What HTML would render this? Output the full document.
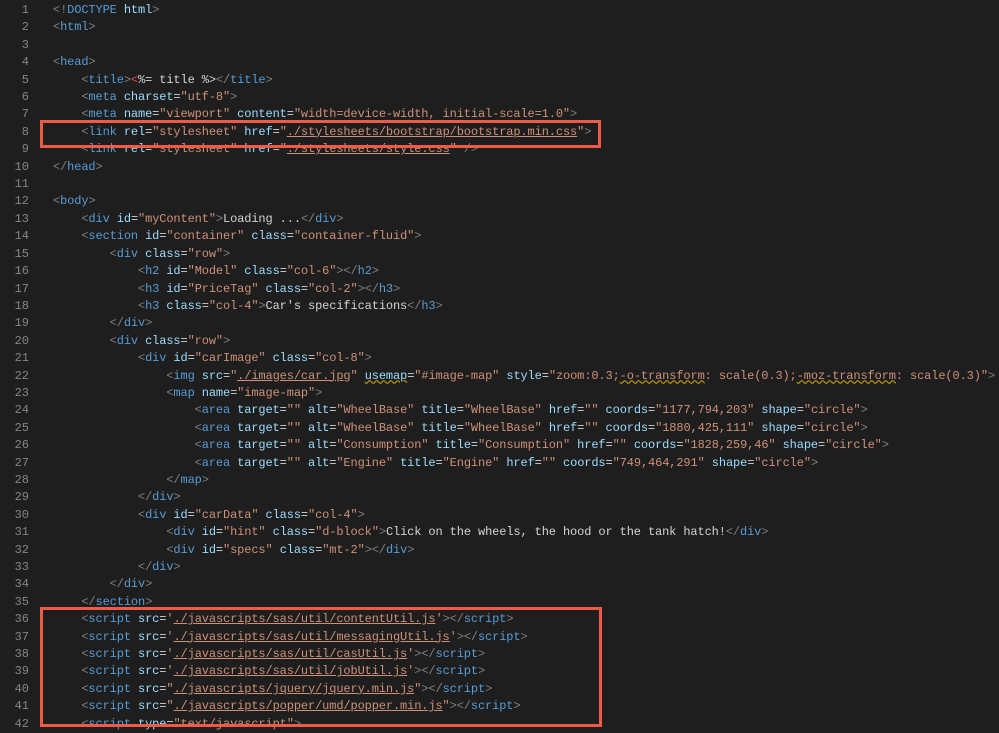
<!DOCTYPE html>
<html><head><meta charset="utf-8"><style>
body{margin:0;background:#1e1e1e;width:999px;height:727px;overflow:hidden;position:relative}
pre{margin:0;position:absolute;top:2px;left:0;font:12px/17.4px "Liberation Mono",monospace;color:#d4d4d4;letter-spacing:-0.12px}
.n{display:inline-block;width:29px;text-align:right;color:#858585;margin-right:24px;letter-spacing:0}
.t{color:#569cd6}.p{color:#808080}.a{color:#9cdcfe}.s{color:#ce9178}.r{color:#f44747}
.u{text-decoration:underline;text-decoration-color:#ce9178}
.w{text-decoration:underline wavy #b89500}
.box{position:absolute;border:3px solid #f05a46;box-sizing:border-box}
</style></head><body>
<pre><span class="n">1</span><span class="p">&lt;!</span><span class="t">DOCTYPE</span> <span class="a">html</span><span class="p">&gt;</span>
<span class="n">2</span><span class="p">&lt;</span><span class="t">html</span><span class="p">&gt;</span>
<span class="n">3</span>
<span class="n">4</span><span class="p">&lt;</span><span class="t">head</span><span class="p">&gt;</span>
<span class="n">5</span>    <span class="p">&lt;</span><span class="t">title</span><span class="p">&gt;</span><span class="r">&lt;</span>%= title %&gt;<span class="p">&lt;/</span><span class="t">title</span><span class="p">&gt;</span>
<span class="n">6</span>    <span class="p">&lt;</span><span class="t">meta</span> <span class="a">charset</span>=<span class="s">"utf-8"</span><span class="p">&gt;</span>
<span class="n">7</span>    <span class="p">&lt;</span><span class="t">meta</span> <span class="a">name</span>=<span class="s">"viewport"</span> <span class="a">content</span>=<span class="s">"width=device-width, initial-scale=1.0"</span><span class="p">&gt;</span>
<span class="n">8</span>    <span class="p">&lt;</span><span class="t">link</span> <span class="a">rel</span>=<span class="s">"stylesheet"</span> <span class="a">href</span>=<span class="s">"<span class="u">./stylesheets/bootstrap/bootstrap.min.css</span>"</span><span class="p">&gt;</span>
<span class="n">9</span>    <span class="p">&lt;</span><span class="t">link</span> <span class="a">rel</span>=<span class="s">"stylesheet"</span> <span class="a">href</span>=<span class="s">"<span class="u">./stylesheets/style.css</span>"</span> <span class="p">/&gt;</span>
<span class="n">10</span><span class="p">&lt;/</span><span class="t">head</span><span class="p">&gt;</span>
<span class="n">11</span>
<span class="n">12</span><span class="p">&lt;</span><span class="t">body</span><span class="p">&gt;</span>
<span class="n">13</span>    <span class="p">&lt;</span><span class="t">div</span> <span class="a">id</span>=<span class="s">"myContent"</span><span class="p">&gt;</span>Loading ...<span class="p">&lt;/</span><span class="t">div</span><span class="p">&gt;</span>
<span class="n">14</span>    <span class="p">&lt;</span><span class="t">section</span> <span class="a">id</span>=<span class="s">"container"</span> <span class="a">class</span>=<span class="s">"container-fluid"</span><span class="p">&gt;</span>
<span class="n">15</span>        <span class="p">&lt;</span><span class="t">div</span> <span class="a">class</span>=<span class="s">"row"</span><span class="p">&gt;</span>
<span class="n">16</span>            <span class="p">&lt;</span><span class="t">h2</span> <span class="a">id</span>=<span class="s">"Model"</span> <span class="a">class</span>=<span class="s">"col-6"</span><span class="p">&gt;&lt;/</span><span class="t">h2</span><span class="p">&gt;</span>
<span class="n">17</span>            <span class="p">&lt;</span><span class="t">h3</span> <span class="a">id</span>=<span class="s">"PriceTag"</span> <span class="a">class</span>=<span class="s">"col-2"</span><span class="p">&gt;&lt;/</span><span class="t">h3</span><span class="p">&gt;</span>
<span class="n">18</span>            <span class="p">&lt;</span><span class="t">h3</span> <span class="a">class</span>=<span class="s">"col-4"</span><span class="p">&gt;</span>Car's specifications<span class="p">&lt;/</span><span class="t">h3</span><span class="p">&gt;</span>
<span class="n">19</span>        <span class="p">&lt;/</span><span class="t">div</span><span class="p">&gt;</span>
<span class="n">20</span>        <span class="p">&lt;</span><span class="t">div</span> <span class="a">class</span>=<span class="s">"row"</span><span class="p">&gt;</span>
<span class="n">21</span>            <span class="p">&lt;</span><span class="t">div</span> <span class="a">id</span>=<span class="s">"carImage"</span> <span class="a">class</span>=<span class="s">"col-8"</span><span class="p">&gt;</span>
<span class="n">22</span>                <span class="p">&lt;</span><span class="t">img</span> <span class="a">src</span>=<span class="s">"<span class="u">./images/car.jpg</span>"</span> <span class="a w">usemap</span>=<span class="s">"#image-map"</span> <span class="a">style</span>=<span class="s">"zoom:0.3;<span class="w">-o-transform</span>: scale(0.3);<span class="w">-moz-transform</span>: scale(0.3)"</span><span class="p">&gt;</span>
<span class="n">23</span>                <span class="p">&lt;</span><span class="t">map</span> <span class="a">name</span>=<span class="s">"image-map"</span><span class="p">&gt;</span>
<span class="n">24</span>                    <span class="p">&lt;</span><span class="t">area</span> <span class="a">target</span>=<span class="s">""</span> <span class="a">alt</span>=<span class="s">"WheelBase"</span> <span class="a">title</span>=<span class="s">"WheelBase"</span> <span class="a">href</span>=<span class="s">""</span> <span class="a">coords</span>=<span class="s">"1177,794,203"</span> <span class="a">shape</span>=<span class="s">"circle"</span><span class="p">&gt;</span>
<span class="n">25</span>                    <span class="p">&lt;</span><span class="t">area</span> <span class="a">target</span>=<span class="s">""</span> <span class="a">alt</span>=<span class="s">"WheelBase"</span> <span class="a">title</span>=<span class="s">"WheelBase"</span> <span class="a">href</span>=<span class="s">""</span> <span class="a">coords</span>=<span class="s">"1880,425,111"</span> <span class="a">shape</span>=<span class="s">"circle"</span><span class="p">&gt;</span>
<span class="n">26</span>                    <span class="p">&lt;</span><span class="t">area</span> <span class="a">target</span>=<span class="s">""</span> <span class="a">alt</span>=<span class="s">"Consumption"</span> <span class="a">title</span>=<span class="s">"Consumption"</span> <span class="a">href</span>=<span class="s">""</span> <span class="a">coords</span>=<span class="s">"1828,259,46"</span> <span class="a">shape</span>=<span class="s">"circle"</span><span class="p">&gt;</span>
<span class="n">27</span>                    <span class="p">&lt;</span><span class="t">area</span> <span class="a">target</span>=<span class="s">""</span> <span class="a">alt</span>=<span class="s">"Engine"</span> <span class="a">title</span>=<span class="s">"Engine"</span> <span class="a">href</span>=<span class="s">""</span> <span class="a">coords</span>=<span class="s">"749,464,291"</span> <span class="a">shape</span>=<span class="s">"circle"</span><span class="p">&gt;</span>
<span class="n">28</span>                <span class="p">&lt;/</span><span class="t">map</span><span class="p">&gt;</span>
<span class="n">29</span>            <span class="p">&lt;/</span><span class="t">div</span><span class="p">&gt;</span>
<span class="n">30</span>            <span class="p">&lt;</span><span class="t">div</span> <span class="a">id</span>=<span class="s">"carData"</span> <span class="a">class</span>=<span class="s">"col-4"</span><span class="p">&gt;</span>
<span class="n">31</span>                <span class="p">&lt;</span><span class="t">div</span> <span class="a">id</span>=<span class="s">"hint"</span> <span class="a">class</span>=<span class="s">"d-block"</span><span class="p">&gt;</span>Click on the wheels, the hood or the tank hatch!<span class="p">&lt;/</span><span class="t">div</span><span class="p">&gt;</span>
<span class="n">32</span>                <span class="p">&lt;</span><span class="t">div</span> <span class="a">id</span>=<span class="s">"specs"</span> <span class="a">class</span>=<span class="s">"mt-2"</span><span class="p">&gt;&lt;/</span><span class="t">div</span><span class="p">&gt;</span>
<span class="n">33</span>            <span class="p">&lt;/</span><span class="t">div</span><span class="p">&gt;</span>
<span class="n">34</span>        <span class="p">&lt;/</span><span class="t">div</span><span class="p">&gt;</span>
<span class="n">35</span>    <span class="p">&lt;/</span><span class="t">section</span><span class="p">&gt;</span>
<span class="n">36</span>    <span class="p">&lt;</span><span class="t">script</span> <span class="a">src</span>=<span class="s">'<span class="u">./javascripts/sas/util/contentUtil.js</span>'</span><span class="p">&gt;&lt;/</span><span class="t">script</span><span class="p">&gt;</span>
<span class="n">37</span>    <span class="p">&lt;</span><span class="t">script</span> <span class="a">src</span>=<span class="s">'<span class="u">./javascripts/sas/util/messagingUtil.js</span>'</span><span class="p">&gt;&lt;/</span><span class="t">script</span><span class="p">&gt;</span>
<span class="n">38</span>    <span class="p">&lt;</span><span class="t">script</span> <span class="a">src</span>=<span class="s">'<span class="u">./javascripts/sas/util/casUtil.js</span>'</span><span class="p">&gt;&lt;/</span><span class="t">script</span><span class="p">&gt;</span>
<span class="n">39</span>    <span class="p">&lt;</span><span class="t">script</span> <span class="a">src</span>=<span class="s">'<span class="u">./javascripts/sas/util/jobUtil.js</span>'</span><span class="p">&gt;&lt;/</span><span class="t">script</span><span class="p">&gt;</span>
<span class="n">40</span>    <span class="p">&lt;</span><span class="t">script</span> <span class="a">src</span>=<span class="s">"<span class="u">./javascripts/jquery/jquery.min.js</span>"</span><span class="p">&gt;&lt;/</span><span class="t">script</span><span class="p">&gt;</span>
<span class="n">41</span>    <span class="p">&lt;</span><span class="t">script</span> <span class="a">src</span>=<span class="s">"<span class="u">./javascripts/popper/umd/popper.min.js</span>"</span><span class="p">&gt;&lt;/</span><span class="t">script</span><span class="p">&gt;</span>
<span class="n">42</span>    <span class="p">&lt;</span><span class="t">script</span> <span class="a">type</span>=<span class="s">"text/javascript"</span><span class="p">&gt;</span>
</pre>
<div class="box" style="left:40px;top:120px;width:561px;height:28px"></div>
<div class="box" style="left:40px;top:607px;width:562px;height:120px"></div>
</body></html>
